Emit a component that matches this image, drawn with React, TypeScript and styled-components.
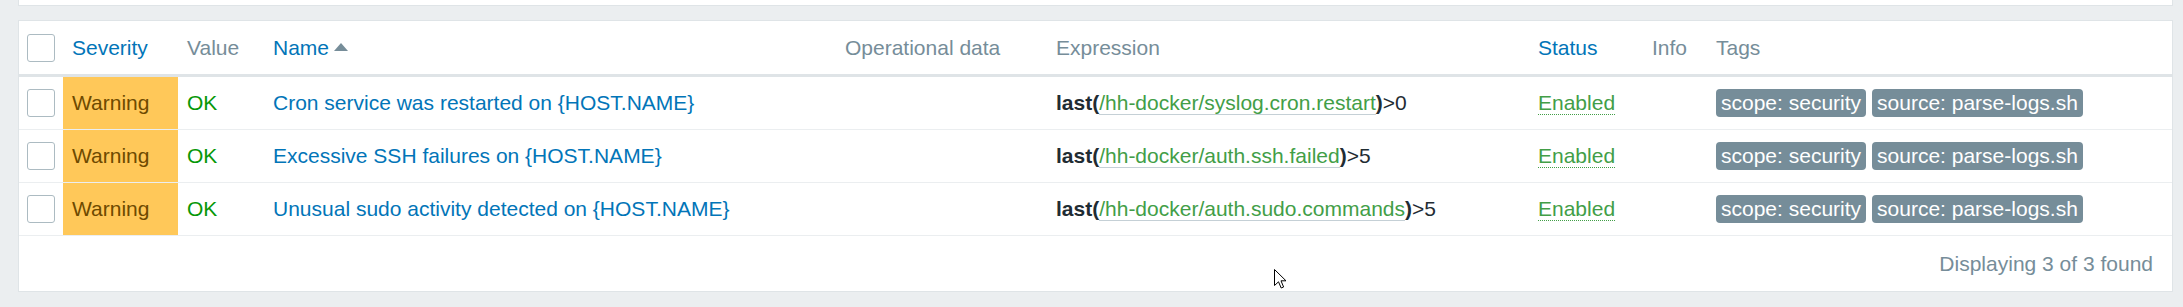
import React from "react";
import styled, { createGlobalStyle } from "styled-components";

const GlobalStyle = createGlobalStyle`
  html, body {
    margin: 0;
    padding: 0;
    background: #ebeef0;
    font-family: "Liberation Sans", Arial, sans-serif;
    font-size: 21px;
    color: #1f2c33;
  }
  * { box-sizing: border-box; }
`;

const COLS = "44px 115px 86px 572px 211px 482px 114px 64px 1fr";

const Page = styled.div`
  position: relative;
  padding: 0 10px 0 18px;
  height: 307px;
  overflow: hidden;
`;

const PrevPanel = styled.div`
  height: 6px;
  background: #fff;
  border: 1px solid #dfe4e7;
  border-top: none;
`;

const Panel = styled.div`
  margin-top: 14px;
  background: #fff;
  border: 1px solid #dfe4e7;
`;

const HeadRow = styled.div`
  display: grid;
  grid-template-columns: ${COLS};
  height: 56px;
  border-bottom: 3px solid #dfe4e7;
`;

const Row = styled.div`
  display: grid;
  grid-template-columns: ${COLS};
  height: 53px;
  border-bottom: 1px solid #ebeef0;
`;

const HeadCell = styled.div<{ $link?: boolean; $pad?: number }>`
  display: flex;
  align-items: center;
  padding: 0 ${(p) => (p.$pad ?? 9)}px;
  white-space: nowrap;
  color: ${(p) => (p.$link ? "#0275b8" : "#768d99")};
`;

const Cell = styled.div<{ $bg?: string; $color?: string; $pad?: number }>`
  display: flex;
  align-items: center;
  padding: 0 ${(p) => (p.$pad ?? 9)}px;
  white-space: nowrap;
  background: ${(p) => p.$bg ?? "transparent"};
  color: ${(p) => p.$color ?? "#1f2c33"};
`;

const Checkbox = styled.span`
  display: inline-block;
  width: 28px;
  height: 28px;
  border: 1px solid #acbbc2;
  border-radius: 3px;
  background: #fff;
`;

const SortArrow = styled.span`
  display: inline-block;
  width: 0;
  height: 0;
  margin-left: 5px;
  margin-top: -2px;
  border-left: 7px solid transparent;
  border-right: 7px solid transparent;
  border-bottom: 8px solid #768d99;
`;

const Link = styled.span`
  color: #0275b8;
`;

const Func = styled.b`
  font-weight: bold;
  color: #1f2c33;
`;

const ItemLink = styled.span`
  color: #429e47;
  border-bottom: 1px solid #c5d0d6;
  line-height: 22px;
`;

const Status = styled.span`
  color: #429e47;
  border-bottom: 1px dotted #429e47;
  line-height: 23px;
`;

const Tags = styled.div`
  display: flex;
  gap: 6px;
`;

const Tag = styled.span`
  display: inline-flex;
  align-items: center;
  height: 28px;
  padding: 0 5px;
  border-radius: 4px;
  background: #768d99;
  color: #fff;
`;

const Footer = styled.div`
  display: flex;
  align-items: center;
  justify-content: flex-end;
  height: 55px;
  padding-right: 19px;
  color: #768d99;
`;

const Cursor = styled.svg`
  position: absolute;
  left: 1274px;
  top: 269px;
`;

type Trigger = { name: string; key: string; op: string };

const triggers: Trigger[] = [
  { name: "Cron service was restarted on {HOST.NAME}", key: "/hh-docker/syslog.cron.restart", op: ">0" },
  { name: "Excessive SSH failures on {HOST.NAME}", key: "/hh-docker/auth.ssh.failed", op: ">5" },
  { name: "Unusual sudo activity detected on {HOST.NAME}", key: "/hh-docker/auth.sudo.commands", op: ">5" },
];

export default function App() {
  return (
    <>
      <GlobalStyle />
      <Page>
        <PrevPanel />
        <Panel>
          <HeadRow>
            <HeadCell $pad={8}>
              <Checkbox />
            </HeadCell>
            <HeadCell $link>Severity</HeadCell>
            <HeadCell>Value</HeadCell>
            <HeadCell $link>
              Name
              <SortArrow />
            </HeadCell>
            <HeadCell>Operational data</HeadCell>
            <HeadCell>Expression</HeadCell>
            <HeadCell $link>Status</HeadCell>
            <HeadCell>Info</HeadCell>
            <HeadCell>Tags</HeadCell>
          </HeadRow>
          {triggers.map((t) => (
            <Row key={t.name}>
              <Cell $pad={8}>
                <Checkbox />
              </Cell>
              <Cell $bg="#ffc859" $color="#6e4a00">
                Warning
              </Cell>
              <Cell $color="#079707">OK</Cell>
              <Cell>
                <Link>{t.name}</Link>
              </Cell>
              <Cell />
              <Cell>
                <Func>last(</Func>
                <ItemLink>{t.key}</ItemLink>
                <Func>)</Func>
                {t.op}
              </Cell>
              <Cell>
                <Status>Enabled</Status>
              </Cell>
              <Cell />
              <Cell>
                <Tags>
                  <Tag>scope: security</Tag>
                  <Tag>source: parse-logs.sh</Tag>
                </Tags>
              </Cell>
            </Row>
          ))}
          <Footer>Displaying 3 of 3 found</Footer>
        </Panel>
        <Cursor width="13" height="20" viewBox="0 0 13 20">
          <path
            d="M0.5 0.5 L0.5 16.5 L4.5 12.8 L7.2 19 L9.6 18 L7 11.8 L12 11.8 Z"
            fill="#fff"
            stroke="#000"
            strokeWidth="1"
            strokeLinejoin="round"
          />
        </Cursor>
      </Page>
    </>
  );
}
